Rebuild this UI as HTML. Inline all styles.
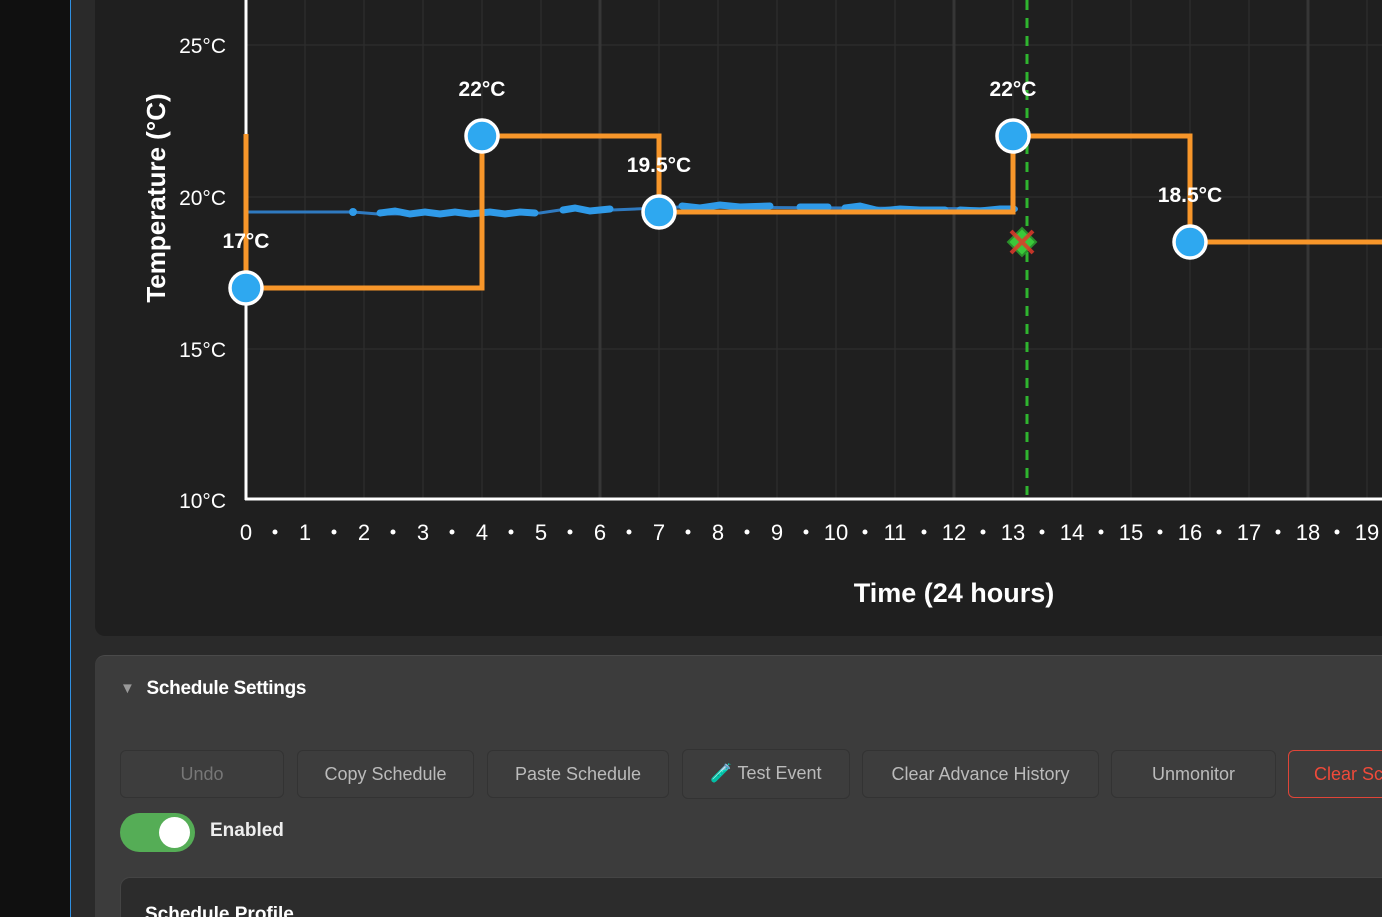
<!DOCTYPE html>
<html><head><meta charset="utf-8"><style>
*{margin:0;padding:0;box-sizing:border-box}
html,body{width:1382px;height:917px;overflow:hidden}
body{background:#101010;font-family:"Liberation Sans",sans-serif;position:relative}
.gut{position:absolute;left:70px;top:0;width:1px;height:917px;background:#2f8fe0}
.gut2{position:absolute;left:71px;top:0;width:1311px;height:917px;background:#2a2a2a}
.chart{position:absolute;left:95px;top:-20px;width:1320px;height:656px;background:#1f1f1f;border-radius:10px}
.set{position:absolute;left:95px;top:655px;width:1320px;height:262px;background:#3c3c3c;border-radius:10px 10px 0 0;border-top:1px solid #4a4a4a}
.hdr{position:absolute;left:120px;top:678px;color:#fff;font-size:19px;font-weight:bold;letter-spacing:-0.3px}
.hdr span{color:#999;font-size:15px;margin-right:12px;position:relative;top:-1px}
.btn{position:absolute;top:750px;height:48px;border:1px solid #333;border-radius:6px;color:#bbb;font-size:18px;text-align:center;line-height:46px;background:#3d3d3d;white-space:nowrap;overflow:hidden}
.tog{position:absolute;left:120px;top:813px;width:75px;height:39px;background:#55ad56;border-radius:20px}
.tog i{position:absolute;left:39px;top:4px;width:31px;height:31px;border-radius:50%;background:#fff}
.en{position:absolute;left:210px;top:820px;color:#eee;font-size:19px;font-weight:bold}
.card{position:absolute;left:120px;top:877px;width:1300px;height:80px;background:#2c2c2c;border-radius:10px;border:1px solid #444}
.card b{position:absolute;left:24px;top:26px;color:#fff;font-size:19px}
</style></head><body>
<div class="gut2"></div><div class="gut"></div>
<div class="chart"></div>
<svg style="position:absolute;left:0;top:0" width="1382" height="640" font-family="Liberation Sans, sans-serif">
<g stroke="#2c2c2c" stroke-width="1.5">
<line x1="305" y1="0" x2="305" y2="500"/><line x1="364" y1="0" x2="364" y2="500"/><line x1="423" y1="0" x2="423" y2="500"/><line x1="482" y1="0" x2="482" y2="500"/><line x1="541" y1="0" x2="541" y2="500"/><line x1="659" y1="0" x2="659" y2="500"/><line x1="718" y1="0" x2="718" y2="500"/><line x1="777" y1="0" x2="777" y2="500"/><line x1="836" y1="0" x2="836" y2="500"/><line x1="895" y1="0" x2="895" y2="500"/><line x1="1013" y1="0" x2="1013" y2="500"/><line x1="1072" y1="0" x2="1072" y2="500"/><line x1="1131" y1="0" x2="1131" y2="500"/><line x1="1190" y1="0" x2="1190" y2="500"/><line x1="1249" y1="0" x2="1249" y2="500"/><line x1="1367" y1="0" x2="1367" y2="500"/>
<line x1="246" y1="45" x2="1382" y2="45"/><line x1="246" y1="197" x2="1382" y2="197"/><line x1="246" y1="349" x2="1382" y2="349"/>
</g>
<g stroke="#363636" stroke-width="3"><line x1="600" y1="0" x2="600" y2="500"/><line x1="954" y1="0" x2="954" y2="500"/><line x1="1308" y1="0" x2="1308" y2="500"/></g>
<line x1="246" y1="0" x2="246" y2="500" stroke="#fff" stroke-width="3"/>
<line x1="245" y1="499" x2="1382" y2="499" stroke="#fff" stroke-width="3"/>
<g fill="#fff" font-size="21" text-anchor="end"><text x="226" y="53">25°C</text><text x="226" y="205">20°C</text><text x="226" y="357">15°C</text><text x="226" y="508">10°C</text></g>
<g fill="#fff" font-size="22" text-anchor="middle">
<text x="246" y="540">0</text><text x="305" y="540">1</text><text x="364" y="540">2</text><text x="423" y="540">3</text><text x="482" y="540">4</text><text x="541" y="540">5</text><text x="600" y="540">6</text><text x="659" y="540">7</text><text x="718" y="540">8</text><text x="777" y="540">9</text><text x="836" y="540">10</text><text x="895" y="540">11</text><text x="954" y="540">12</text><text x="1013" y="540">13</text><text x="1072" y="540">14</text><text x="1131" y="540">15</text><text x="1190" y="540">16</text><text x="1249" y="540">17</text><text x="1308" y="540">18</text><text x="1367" y="540">19</text>
</g>
<g fill="#fff"><circle cx="275" cy="532" r="2.5"/><circle cx="334" cy="532" r="2.5"/><circle cx="393" cy="532" r="2.5"/><circle cx="452" cy="532" r="2.5"/><circle cx="511" cy="532" r="2.5"/><circle cx="570" cy="532" r="2.5"/><circle cx="629" cy="532" r="2.5"/><circle cx="688" cy="532" r="2.5"/><circle cx="747" cy="532" r="2.5"/><circle cx="806" cy="532" r="2.5"/><circle cx="865" cy="532" r="2.5"/><circle cx="924" cy="532" r="2.5"/><circle cx="983" cy="532" r="2.5"/><circle cx="1042" cy="532" r="2.5"/><circle cx="1101" cy="532" r="2.5"/><circle cx="1160" cy="532" r="2.5"/><circle cx="1219" cy="532" r="2.5"/><circle cx="1278" cy="532" r="2.5"/><circle cx="1337" cy="532" r="2.5"/></g>
<text x="954" y="602" fill="#fff" font-size="27" font-weight="bold" text-anchor="middle">Time (24 hours)</text>
<text transform="translate(165,198) rotate(-90)" fill="#fff" font-size="26" font-weight="bold" text-anchor="middle">Temperature (°C)</text>
<line x1="1027" y1="0" x2="1027" y2="495" stroke="#2fb52f" stroke-width="3" stroke-dasharray="10,8"/>
<g stroke="#2f7ac0" stroke-width="3" fill="none"><polyline points="246,212 353,212 378,214 540,213 560,210 612,210 680,207 1018,209"/></g>
<g stroke="#2f9ae8" stroke-width="7" stroke-linecap="round" fill="none">
<polyline points="380,213 395,211 410,214 425,212 440,214 455,212 470,214 490,212 505,214 520,212 535,213"/>
<polyline points="563,210 575,208 590,211 610,209"/>
<polyline points="682,206 700,208 720,205 740,207 770,206"/><line x1="800" y1="207" x2="828" y2="207"/>
<polyline points="845,208 860,206 880,211 900,209 920,210 945,210"/><polyline points="960,210 980,211 1000,209 1014,209"/>
</g>
<circle cx="353" cy="212" r="4" fill="#2f9ae8"/>
<polyline points="246,134 246,288 482,288 482,136 659,136 659,212 1013,212 1013,136 1190,136 1190,242 1382,242" fill="none" stroke="#f7962a" stroke-width="5"/>
<g fill="#2ea8f0" stroke="#fff" stroke-width="3.5"><circle cx="246" cy="288" r="16"/><circle cx="482" cy="136" r="16"/><circle cx="659" cy="212" r="16"/><circle cx="1013" cy="136" r="16"/><circle cx="1190" cy="242" r="16"/></g>
<polygon points="1022,228 1036,242 1022,256 1008,242" fill="#3ac83a" stroke="#2a8f2a" stroke-width="2"/>
<g stroke="#e03a2a" stroke-width="4" opacity="0.85"><line x1="1011" y1="231" x2="1033" y2="253"/><line x1="1033" y1="231" x2="1011" y2="253"/></g>
<g fill="#fff" font-size="21" font-weight="bold" text-anchor="middle"><text x="246" y="248">17°C</text><text x="482" y="96">22°C</text><text x="659" y="172">19.5°C</text><text x="1013" y="96">22°C</text><text x="1190" y="202">18.5°C</text></g>
</svg>
<div class="set"></div>
<div class="hdr"><span>▼</span>Schedule Settings</div>
<div class="btn" style="left:120px;width:164px;color:#777">Undo</div>
<div class="btn" style="left:297px;width:177px">Copy Schedule</div>
<div class="btn" style="left:487px;width:182px">Paste Schedule</div>
<div class="btn" style="left:682px;width:168px;top:749px;height:50px"><span style="color:#9be070">🧪</span> Test Event</div>
<div class="btn" style="left:862px;width:237px">Clear Advance History</div>
<div class="btn" style="left:1111px;width:165px">Unmonitor</div>
<div class="btn" style="left:1288px;width:160px;border-color:#e04538;color:#f04a3a;text-align:left;padding-left:25px">Clear Schedule</div>
<div class="tog"><i></i></div>
<div class="en">Enabled</div>
<div class="card"><b>Schedule Profile</b></div>
</body></html>
